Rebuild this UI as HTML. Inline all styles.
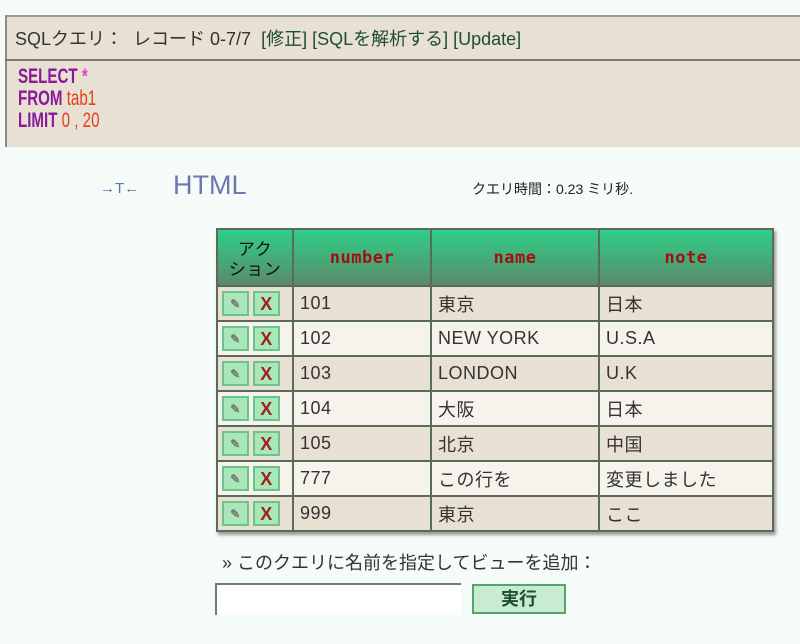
<!DOCTYPE html>
<html><head><meta charset="utf-8"><style>
body{margin:0;width:800px;height:644px;background:#f4fbf8;position:relative;overflow:hidden;font-family:"Liberation Sans","Noto Sans CJK JP",sans-serif;}
.a{position:absolute;}
#top{left:5px;top:15px;width:800px;height:130px;background:#e8e0d2;border-left:2px solid #8a8a8a;border-top:2px solid #9a9a9a;}
#hdr{left:5px;top:15px;width:800px;height:44px;border-bottom:2px solid #7a7a7a;}
#hdr span{position:absolute;left:10px;top:10px;font-size:18px;color:#333;white-space:nowrap;}
#hdr b{font-weight:normal;color:#1d4d35;}
.sql{left:18px;font-family:"Liberation Sans",sans-serif;font-weight:bold;font-size:21px;transform:scaleX(0.72);transform-origin:left;color:#8a1a9a;line-height:22px;}
.sql i{font-style:normal;font-weight:normal;color:#e0401a;}
table{position:absolute;left:216px;top:228px;border-collapse:collapse;box-shadow:2px 3px 3px #999;}
td,th{border:2px solid #5a6b5a;height:33px;padding:0 6px;font-size:18px;color:#333;letter-spacing:0.5px;}
th{height:55px;background:linear-gradient(#2fcf88,#5a8a6a);color:#a01010;font-family:"DejaVu Sans Mono",monospace;font-size:17px;font-weight:bold;}
tr.o td{background:#e8e0d2}tr.e td{background:#f6f2ec}
td.ac{padding:0 2px;width:70px;white-space:nowrap}
.ic{display:inline-block;width:27px;height:25px;background:#a8e8b8;border:2px solid #6cc48c;box-sizing:border-box;vertical-align:middle;margin:0 2px;text-align:center;line-height:22px;font-weight:bold;color:#a02020;font-size:18px;}
.ic.e{color:#777;font-size:12px;}
</style></head><body>
<div class="a" id="top"></div>
<div class="a" id="hdr"><span>SQLクエリ：&nbsp; レコード 0-7/7 &nbsp;<b>[修正] [SQLを解析する] [Update]</b></span></div>
<div class="a sql" style="top:66px">SELECT <span style="color:#e040d0">*</span></div>
<div class="a sql" style="top:88px">FROM <i>tab1</i></div>
<div class="a sql" style="top:110px">LIMIT <i>0 , 20</i></div>
<div class="a" style="left:100px;top:180px;font-size:15px;color:#6070a8">→T←</div>
<div class="a" style="left:173px;top:170px;font-size:27px;color:#6a78b0">HTML</div>
<div class="a" style="left:472px;top:179px;font-size:14px;color:#222">クエリ時間：0.23 ミリ秒.</div>
<table>
<tr><th style="width:64px;color:#111;font-family:'Noto Sans CJK JP',sans-serif;font-weight:normal;font-size:17px;line-height:20px;padding:0">アク<br>ション</th><th style="width:124px">number</th><th style="width:154px">name</th><th style="width:160px">note</th></tr>
<tr class="o"><td class="ac"><span class="ic e">✎</span><span class="ic">X</span></td><td>101</td><td>東京</td><td>日本</td></tr>
<tr class="e"><td class="ac"><span class="ic e">✎</span><span class="ic">X</span></td><td>102</td><td>NEW YORK</td><td>U.S.A</td></tr>
<tr class="o"><td class="ac"><span class="ic e">✎</span><span class="ic">X</span></td><td>103</td><td>LONDON</td><td>U.K</td></tr>
<tr class="e"><td class="ac"><span class="ic e">✎</span><span class="ic">X</span></td><td>104</td><td>大阪</td><td>日本</td></tr>
<tr class="o"><td class="ac"><span class="ic e">✎</span><span class="ic">X</span></td><td>105</td><td>北京</td><td>中国</td></tr>
<tr class="e"><td class="ac"><span class="ic e">✎</span><span class="ic">X</span></td><td>777</td><td>この行を</td><td>変更しました</td></tr>
<tr class="o"><td class="ac"><span class="ic e">✎</span><span class="ic">X</span></td><td>999</td><td>東京</td><td>ここ</td></tr>
</table>
<div class="a" style="left:222px;top:549px;font-size:18px;color:#333">» このクエリに名前を指定してビューを追加：</div>
<div class="a" style="left:215px;top:583px;width:246px;height:32px;background:#fff;border-top:2px solid #777;border-left:2px solid #777;box-sizing:border-box"></div>
<div class="a" style="left:472px;top:584px;width:94px;height:30px;background:#c8ecd0;border:2px solid #5aa070;box-sizing:border-box;text-align:center;font-size:18px;font-weight:bold;color:#1d4d35;line-height:26px">実行</div>
</body></html>
